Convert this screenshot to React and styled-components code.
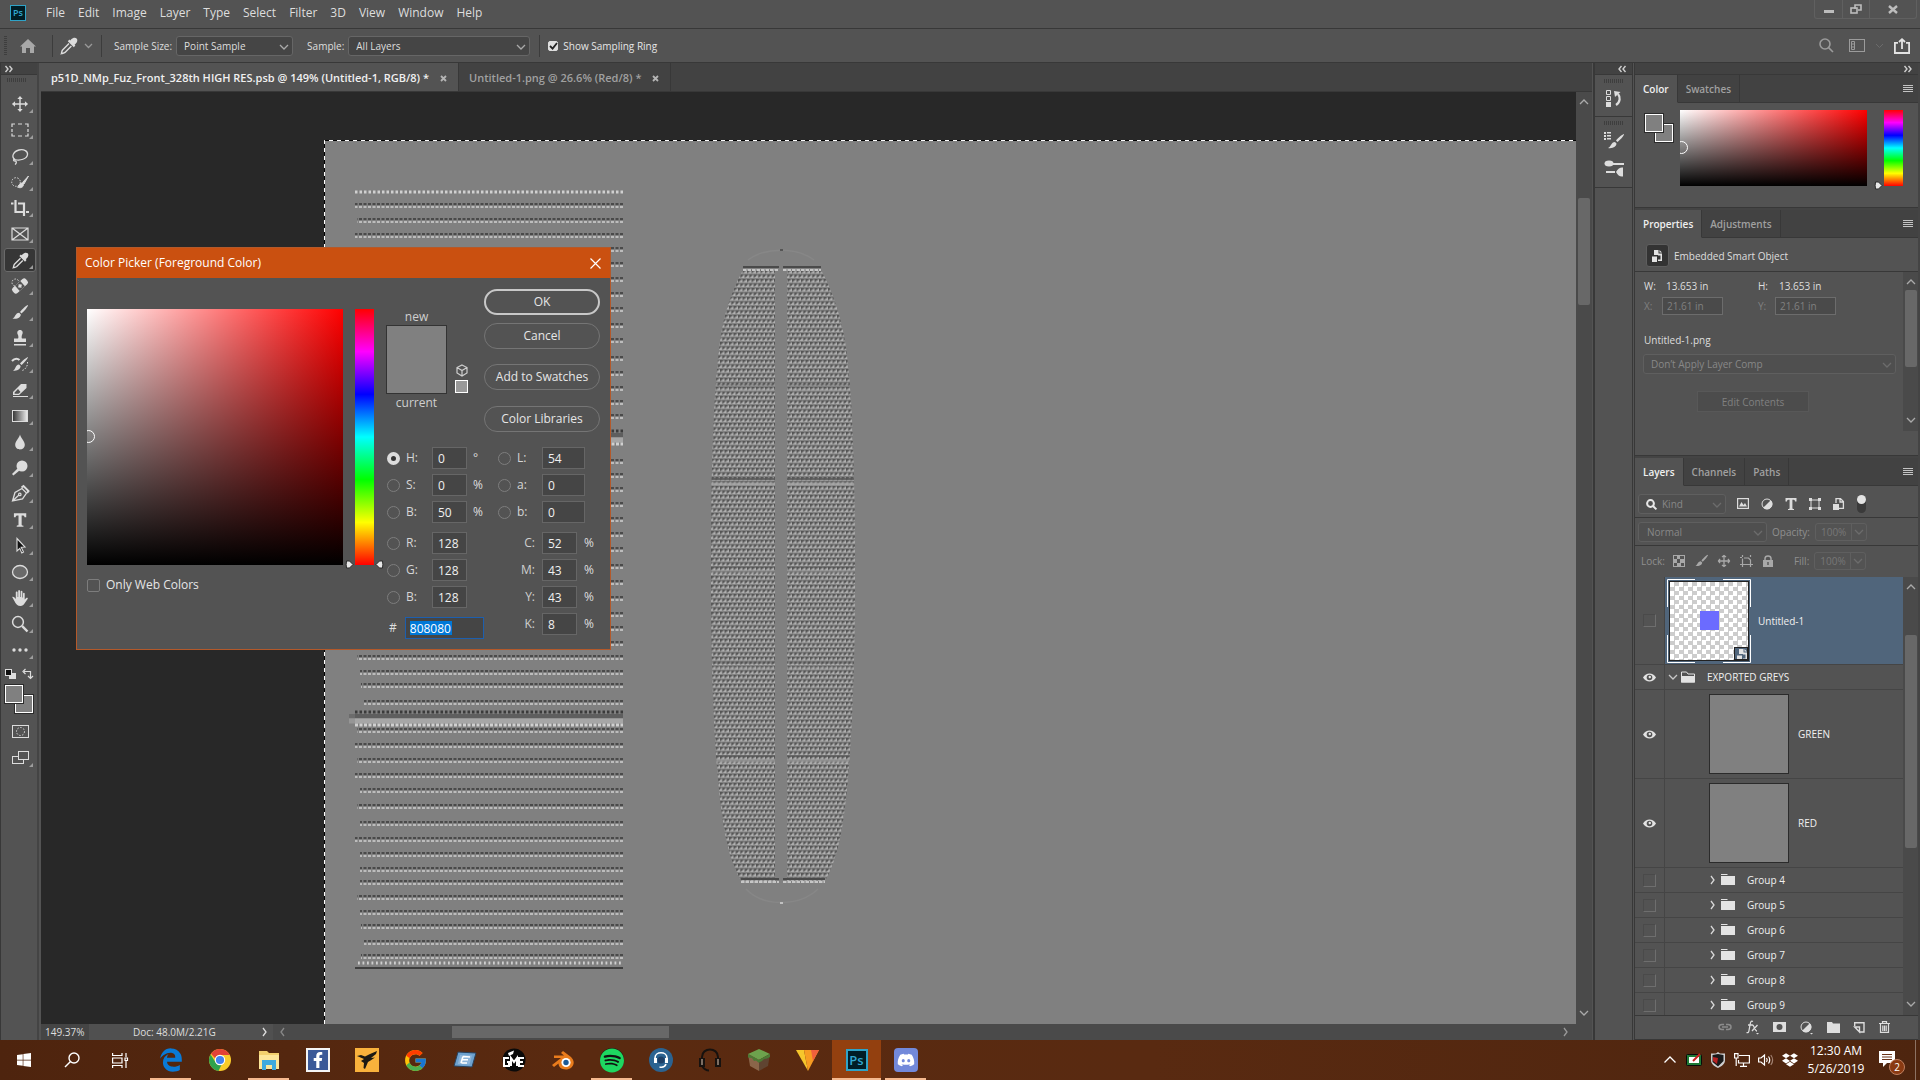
import React from 'react';
import styled, { createGlobalStyle, css } from 'styled-components';
import { FaWindows, FaSpotify, FaDropbox, FaDiscord, FaFacebookF } from 'react-icons/fa';
import { FaEdgeLegacy } from 'react-icons/fa6';
import { FcGoogle } from 'react-icons/fc';

const c = {
  panel: '#535353',
  dark: '#424242',
  line: '#383838',
  field: '#454545',
  track: '#4a4a4a',
  thumb: '#686868',
  text: '#dedede',
  dim: '#a0a0a0',
  off: '#808080',
  edge: '#666',
  orange: '#ca5010',
  icon: '#dcdcdc',
};

const Global = createGlobalStyle`
  * { box-sizing: border-box; }
  body {
    margin: 0;
    overflow: hidden;
    background: ${c.panel};
    color: ${c.text};
    font-family: "Open Sans", "Noto Sans", sans-serif;
    font-size: 10px;
    line-height: 16px;
  }
  button, input, select {
    margin: 0;
    font: inherit;
    color: inherit;
  }
  button {
    padding: 0;
    border: 0;
    background: none;
  }
  ul { margin: 0; padding: 0; list-style: none; }
`

const Screen = styled.div`
  display: flex;
  flex-direction: column;
  height: 100vh;
`

const Row = styled.div`
  display: flex;
  align-items: center;
  gap: ${p => p.$gap || 0}px;
`

const Spacer = styled.div`
  flex: 1;
`

const Svg = styled.svg`
  display: block;
  flex: none;
  overflow: visible;
`

// ---------- menu + options bar ----------

const MenuBar = styled.nav`
  display: flex;
  align-items: flex-start;
  height: 29px;
  padding-left: 10px;
  border-bottom: 1px solid ${c.line};
`

const MenuItems = styled.div`
  display: flex;
  gap: 13px;
  margin-left: 20px;
  font-size: 12px;
  line-height: 26px;
`

const PsLogo = styled.div`
  width: ${p => p.$size}px;
  height: ${p => p.$size}px;
  border: ${p => (p.$size > 20 ? 2 : 1)}px solid #2fa3c7;
  background: #001d26;
  color: #31a8d0;
  font-size: ${p => (p.$size > 20 ? 13 : 9)}px;
  font-weight: 600;
  line-height: ${p => (p.$size > 20 ? 18 : 13)}px;
  text-align: center;
`

const LogoSlot = styled.div`
  padding-top: 5px;
`

const WindowButtons = styled.div`
  display: flex;
  height: 19px;
  margin: 0 3px 0 auto;
  border: 1px solid #606060;
  border-top: 0;
  border-radius: 0 0 3px 3px;
  button {
    display: flex;
    align-items: center;
    justify-content: center;
    width: 27px;
  }
  button + button { border-left: 1px solid #606060; }
  button:last-child { width: 47px; }
`

const OptionsBar = styled.div`
  display: flex;
  align-items: center;
  height: 33px;
  padding: 0 10px 0 4px;
  background: ${c.panel};
`

const Separator = styled.div`
  width: 1px;
  height: 22px;
  margin: 0 ${p => p.$right}px 0 ${p => p.$left}px;
  background: #3c3c3c;
`

const Grip = styled.div`
  width: ${p => (p.$wide ? 20 : 3)}px;
  height: ${p => (p.$wide ? 4 : 20)}px;
  background: repeating-linear-gradient(
    ${p => (p.$wide ? 'to right' : 'to bottom')}, #3e3e3e 0 1px, transparent 1px 2px);
`

const SelectWrap = styled.div`
  position: relative;
  width: ${p => (p.$w ? p.$w + 'px' : 'auto')};
  color: ${p => (p.$off ? '#888' : c.text)};
  select {
    display: block;
    appearance: none;
    width: 100%;
    height: 20px;
    padding: 0 20px 0 ${p => p.$pad || 7}px;
    border: 1px solid ${p => (p.$off ? '#5f5f5f' : c.edge)};
    border-radius: 3px;
    background: ${p => (p.$off ? '#4f4f4f' : c.field)};
    opacity: 1;
  }
  svg.chev {
    position: absolute;
    right: 4px;
    top: 50%;
    margin-top: -2px;
    pointer-events: none;
  }
  svg.lens {
    position: absolute;
    left: 8px;
    top: 5px;
  }
`

const Tick = styled.input`
  appearance: none;
  display: block;
  width: ${p => p.$size}px;
  height: ${p => p.$size}px;
  border: 1px solid #7d7d7d;
  border-radius: 2px;
  background: ${c.panel};
  &:checked {
    border-color: ${c.text};
    background: ${c.text};
  }
`

const TickWrap = styled.label`
  position: relative;
  display: flex;
  align-items: center;
  gap: ${p => p.$gap}px;
  color: #e6e6e6;
  svg { position: absolute; left: 1px; top: 4px; }
`

const SampleGroup = styled.div`
  display: flex;
  align-items: center;
  gap: 4px;
  margin-left: ${p => p.$left || 0}px;
`

const HomeButton = styled.button`
  margin: 0 16px 0 13px;
`

const Chevron = ({ dir = 'down', color = '#aaa', className }) => {
  const d = {
    down: 'M1 1 L5 5 L9 1',
    up: 'M1 5 L5 1 L9 5',
    right: 'M3 -1 L6 3 L3 7',
    left: 'M6 -1 L3 3 L6 7',
  }[dir]
  return (
    <Svg className={className} width="10" height="6" viewBox="0 0 10 6" fill="none" stroke={color} strokeWidth="1.3">
      <path d={d} />
    </Svg>
  )
}

const Select = ({ label, value, w, off, pad, lens }) => (
  <SelectWrap $w={w} $off={off} $pad={pad}>
    {lens && (
      <Svg className="lens" width="11" height="11" viewBox="0 0 11 11" fill="none" stroke="#e8e8e8" strokeWidth="2">
        <circle cx="4.5" cy="4.5" r="3.4" /><path d="M7 7 L10.4 10.4" />
      </Svg>
    )}
    <select aria-label={label} defaultValue={value} disabled={off}>
      <option>{value}</option>
    </select>
    <Chevron className="chev" color={off ? '#6c6c6c' : '#aaa'} />
  </SelectWrap>
)

const Eyedropper = ({ size = 18 }) => (
  <Svg width={size} height={size} viewBox="0 0 18 18">
    <path d="M11 2.6 C13 0.4 15.4 0.2 16.6 1.4 C17.8 2.6 17.6 5 15.4 7 L14.6 7.8 L15.4 8.6 L13.8 10.2 L7.8 4.2 L9.4 2.6 L10.2 3.4 Z" fill={c.icon} />
    <path d="M9 6.6 L2.6 13 C1.6 14.2 2 14.8 1.4 16.6 C3.2 16 3.8 16.4 5 15.4 L11.4 9" fill="none" stroke={c.icon} strokeWidth="1.4" />
  </Svg>
)

const Arrows = ({ left }) => (
  <Svg width="8" height="6" fill="none" stroke="#cfcfcf" strokeWidth="1.4">
    <path d={left ? 'M3.5 0 L1 3 L3.5 6 M7.5 0 L5 3 L7.5 6' : 'M.5 0 L3 3 L.5 6 M4.5 0 L7 3 L4.5 6'} />
  </Svg>
)

const Menu = () => (
  <MenuBar>
    <LogoSlot><PsLogo $size={16}>Ps</PsLogo></LogoSlot>
    <MenuItems>
      {['File', 'Edit', 'Image', 'Layer', 'Type', 'Select', 'Filter', '3D', 'View', 'Window', 'Help'].map(m => (
        <button key={m}>{m}</button>
      ))}
    </MenuItems>
    <WindowButtons>
      <button aria-label="Minimize">
        <Svg width="10" height="10"><rect y="6" width="10" height="3" fill="#bdbdbd" /></Svg>
      </button>
      <button aria-label="Restore">
        <Svg width="12" height="10" fill="none" stroke="#bdbdbd" strokeWidth="1.6">
          <path d="M5 5 V1 H11 V6 H8" /><rect x="1" y="4" width="6" height="5" />
        </Svg>
      </button>
      <button aria-label="Close">
        <Svg width="10" height="9" fill="none" stroke="#bdbdbd" strokeWidth="2.4"><path d="M1 1 L9 8 M9 1 L1 8" /></Svg>
      </button>
    </WindowButtons>
  </MenuBar>
)

const Options = () => (
  <OptionsBar>
    <Grip />
    <HomeButton aria-label="Home">
      <Svg width="16" height="16"><path d="M8 1 L16 8.5 H14 V15 H10 V10 H6 V15 H2 V8.5 H0 Z" fill="#a8a8a8" /></Svg>
    </HomeButton>
    <Separator $left={0} $right={7} />
    <Eyedropper />
    <Svg width="22" height="6" viewBox="-7 0 22 6" fill="none" stroke="#999" strokeWidth="1.3"><path d="M0 1 L3.5 4.5 L7 1" /></Svg>
    <Separator $left={1} $right={12} />
    <SampleGroup>
      <span>Sample Size:</span>
      <Select label="Sample Size" value="Point Sample" w={117} />
    </SampleGroup>
    <SampleGroup $left={14}>
      <span>Sample:</span>
      <Select label="Sample" value="All Layers" w={182} />
    </SampleGroup>
    <Separator $left={9} $right={8} />
    <TickWrap $gap={5}>
      <Tick type="checkbox" $size={10} defaultChecked />
      <Svg width="9" height="8" fill="none" stroke="#222" strokeWidth="1.8"><path d="M1 4 L3.6 6.6 L8 1" /></Svg>
      Show Sampling Ring
    </TickWrap>
    <Spacer />
    <Row $gap={15}>
      <Svg width="15" height="15" fill="none" stroke="#9b9b9b" strokeWidth="1.6"><circle cx="6" cy="6" r="5" /><path d="M9.6 9.6 L14 14" /></Svg>
      <Row $gap={11}>
        <Svg width="16" height="13" fill="none" stroke="#9b9b9b"><rect x=".5" y=".5" width="15" height="12" /><path d="M2.5 2.5 H5.5 V10.5 H2.5 Z M2.5 5 H5.5 M2.5 8 H5.5" /></Svg>
        <Svg width="7" height="5" fill="none" stroke="#6b6b6b"><path d="M0 1 L3.5 4.5 L7 1" /></Svg>
        <Svg width="16" height="16" fill="none" stroke="#e3e3e3" strokeWidth="1.8"><path d="M4 4.9 H0.9 V15 H15.1 V4.9 H12 M8 11 V1.6 M5 4 L8 1.2 L11 4" /></Svg>
      </Row>
    </Row>
  </OptionsBar>
)

// ---------- tool column ----------

const Workspace = styled.main`
  display: flex;
  flex: 1;
  min-height: 0;
  border-top: 1px solid ${c.line};
`

const ToolColumn = styled.aside`
  display: flex;
  flex-direction: column;
  flex: none;
  width: 39px;
  border-left: 1px solid ${c.line};
  border-right: 2px solid #444;
`

const ColumnHead = styled.div`
  display: flex;
  align-items: center;
  justify-content: ${p => p.$side || 'flex-start'};
  height: 12px;
  padding: 0 6px 0 4px;
  border-bottom: 1px solid ${c.line};
  background: ${c.dark};
`

const GripRow = styled.div`
  display: flex;
  justify-content: center;
  padding: 3px 4px 9px 0;
`

const Tools = styled.div`
  display: grid;
  grid-auto-rows: 26px;
  align-items: center;
  padding: 0 3px;
`

const ToolButton = styled.button`
  position: relative;
  display: flex;
  align-items: center;
  justify-content: center;
  width: 32px;
  height: 24px;
  border-radius: 3px;
  ${p => p.$active && css`
    background: #363636;
    box-shadow: inset 0 0 0 1px #6a6a6a;
  `}
  &::after {
    content: '';
    position: absolute;
    right: 3px;
    bottom: 3px;
    border: 2px solid #9c9c9c;
    border-left-color: transparent;
    border-top-color: transparent;
    display: ${p => (p.$plain ? 'none' : 'block')};
  }
`

const Typeface = () => (
  <path d="M3.5 3 H14.5 V6.5 H13 C12.8 5 12.5 4.8 10.4 4.8 V13 C10.4 13.8 10.8 14 12 14 V15 H6 V14 C7.2 14 7.6 13.8 7.6 13 V4.8 C5.5 4.8 5.2 5 5 6.5 H3.5 Z" fill={c.icon} />
)

const brushPath = 'M17 2 C17.5 3 13 8.5 10.5 10.5 L9 9 C11 6.5 15.5 2 17 2 Z M8.2 9.8 L9.8 11.4 C10 14 6.5 16.5 1.5 15.5 C4.5 14.5 4 10 8.2 9.8 Z'

const L = c.icon
const toolIcons = [
  ['Move', <path d="M9 0 L12 3.5 H9.8 V8.2 H14.5 V6 L18 9 L14.5 12 V9.8 H9.8 V14.5 H12 L9 18 L6 14.5 H8.2 V9.8 H3.5 V12 L0 9 L3.5 6 V8.2 H8.2 V3.5 H6 Z" fill={L} transform="translate(.9 .9) scale(.9)" />],
  ['Marquee', <path d="M1 6 V3 H4 M7 3 H11 M14 3 H17 V6 M17 8 V11 M17 12.5 V15 H14 M11 15 H7 M4 15 H1 V12.5 M1 11 V8" fill="none" stroke={L} strokeWidth="1.2" />],
  ['Lasso', <path d="M4 12.5 C0 10 2 4.5 8 3 C13 2 17 4 16.5 7.5 C16 12 9 14 4 12.5 C2 11.5 2 14 4 14 C6 14 5.5 16.5 4 17.5" fill="none" stroke={L} strokeWidth="1.3" />],
  ['Quick Selection', <g><circle cx="5" cy="9" r="4.3" fill="none" stroke={L} strokeDasharray="1.5 1.5" /><path d="M17.5 3 L11.5 9.5 L13 11 Z M11 10 C8 10 8.5 13 6.5 14 C9 15.5 12.5 14.5 12.5 11.5 Z" fill={L} stroke={L} /></g>],
  ['Crop', <path d="M0 4.5 H2.5 M4.5 1 V13 H12 M7 4.5 H13 V17 M15 13 H18" fill="none" stroke={L} strokeWidth="2.2" />],
  ['Frame', <path d="M1 3 H17 V15 H1 Z M1 3 L17 15 M17 3 L1 15" fill="none" stroke={L} strokeWidth="1.2" />],
  ['Eyedropper', null],
  ['Healing Brush', <g><circle cx="4.5" cy="5.5" r="3.5" fill="none" stroke={L} strokeDasharray="1.5 1.5" /><g transform="rotate(-42 9 9)"><rect x="0" y="5.5" width="18" height="7" rx="2.5" fill={L} /><rect x="5.5" y="5.5" width="7" height="7" fill="#535353" /><path d="M7 9 H11 M9 7 V11" stroke={L} strokeWidth="1.6" /></g></g>],
  ['Brush', <path d={brushPath} fill={L} />],
  ['Clone Stamp', <path d="M9 1 C11.5 1 12.5 3.5 11 6 C10.5 7.5 10.5 9 11 9.5 H15 V13 H3 V9.5 H7 C7.5 9 7.5 7.5 7 6 C5.5 3.5 6.5 1 9 1 Z M3 15 H15 V16.5 H3 Z" fill={L} />],
  ['History Brush', <g><path d="M17 2 C17.5 3 12 9 10.5 10 L9 8.5 C11 6 16 2 17 2 Z M8 9.5 L9.6 11 C9.6 13.5 6.5 16.5 2 15.5 C5 14.5 4 10 8 9.5 Z" fill={L} /><path d="M1 6 C4 2.5 7 3.5 8.5 5" fill="none" stroke={L} strokeWidth="2" /><path d="M16.5 7 C17 11 14 15 11 15.5" fill="none" stroke={L} strokeDasharray="1.5 1.5" /></g>],
  ['Eraser', <path d="M2 11 L10 3 H15.5 V7 L8 14 H2 Z M3.6 11.4 V12.8 H7.5 L9.5 11 L7 8 Z M2 15 H17 V16 H2 Z" fillRule="evenodd" fill={L} />],
  ['Gradient', <g><defs><linearGradient id="toolGrad"><stop offset="0" stopColor="#333" /><stop offset="1" stopColor="#eee" /></linearGradient></defs><rect x="1.5" y="3.5" width="15" height="11" fill="url(#toolGrad)" stroke={L} /></g>],
  ['Blur', <path d="M9 1.5 C10 5.5 13.8 8 13.8 11.8 C13.8 14.8 11.5 16.5 9 16.5 C6.5 16.5 4.2 14.8 4.2 11.8 C4.2 8 8 5.5 9 1.5 Z" fill={L} />],
  ['Dodge', <g fill={L}><ellipse cx="11" cy="7" rx="5.5" ry="5.5" /><path d="M6.5 9.5 L1 15 L2.4 16.4 L8.5 11.5 Z" /></g>],
  ['Pen', <g fill="none" stroke={L} strokeWidth="1.3"><path d="M1.5 16 L4 7.5 L11 3.5 L15.5 8 L11.5 13.8 Z M1.5 16 L8 10" /><path d="M10.5 2.5 L12.5 1 L17.5 6 L16 8" strokeWidth="2" /><circle cx="8.8" cy="9.4" r="1.2" /></g>],
  ['Type', <g transform="translate(-1 -1) scale(1.12)"><Typeface /></g>],
  ['Path Selection', <path d="M6 1.5 L14 10 L10.2 10.2 L12.5 15 L10.8 16 L8.8 11.4 L6 14 Z" fill="#111" stroke={L} strokeWidth="1.1" />],
  ['Ellipse', <ellipse cx="9" cy="9" rx="7.5" ry="6.5" fill="#6a6a6a" stroke={L} strokeWidth="1.3" />],
  ['Hand', <path d="M1.2 8 C2.2 7.2 3.2 8 4.8 10 V3.5 C4.8 2.2 6.6 2.2 6.6 3.5 V8 H7.2 V2 C7.2 .8 9 .8 9 2 V8 H9.6 V2.5 C9.6 1.4 11.4 1.4 11.4 2.5 V8.5 H12 V4.5 C12 3.4 13.7 3.4 13.7 4.5 V10.5 L15.5 8.8 C16.5 8.4 17.2 9.2 16.6 10 L13.5 14.5 C12.5 16 11.5 17 9.5 17 C6.5 17 5.5 15.5 4.5 14 Z" fill={L} />],
  ['Zoom', <g fill="none" stroke={L}><circle cx="7" cy="7" r="5.4" strokeWidth="1.5" /><path d="M11.2 11.2 L16.5 16.5" strokeWidth="2.4" /></g>],
  ['More', <g fill={L}><circle cx="3" cy="9" r="1.7" /><circle cx="9" cy="9" r="1.7" /><circle cx="15" cy="9" r="1.7" /></g>],
]

const MiniRow = styled.div`
  display: flex;
  align-items: center;
  justify-content: space-between;
  height: 14px;
  margin-top: 4px;
  padding: 0 4px;
`

const ColorPair = styled.div`
  display: grid;
  grid-template-columns: 10px 8px 10px;
  grid-template-rows: 10px 8px 10px;
  width: max-content;
  margin: ${p => p.$margin || '0'};
`

const Chip = styled.span`
  grid-area: ${p => (p.$back ? '2 / 2 / 4 / 4' : '1 / 1 / 3 / 3')};
  z-index: ${p => (p.$back ? 0 : 1)};
  border: 1px solid #fff;
  outline: 1px solid #2b2b2b;
  background: #808080;
`

const ToolExtras = styled.div`
  display: flex;
  flex-direction: column;
  gap: 3px;
  margin-top: 6px;
  padding: 0 3px;
`

const ToolPanel = () => (
  <ToolColumn>
    <ColumnHead><Arrows /></ColumnHead>
    <GripRow><Grip $wide /></GripRow>
    <Tools>
      {toolIcons.map(([name, art]) => (
        <ToolButton key={name} aria-label={name} $active={name === 'Eyedropper'}>
          {art ? <Svg width="18" height="18" viewBox="0 0 18 18">{art}</Svg> : <Eyedropper size={17} />}
        </ToolButton>
      ))}
    </Tools>
    <MiniRow>
      <Svg width="11" height="10"><rect x="4" y="4" width="7" height="6" fill="#ddd" /><rect x=".5" y=".5" width="6" height="6" fill="#111" stroke="#ddd" /></Svg>
      <Svg width="11" height="10" fill="none" stroke="#ddd" strokeWidth="1.2"><path d="M2 2.5 H8.5 V9 M3.5 0 L1 2.5 L3.5 5 M6 7 L8.5 9.5 L11 7" /></Svg>
    </MiniRow>
    <ColorPair $margin="4px 0 0 4px"><Chip /><Chip $back /></ColorPair>
    <ToolExtras>
      <ToolButton aria-label="Quick Mask" $plain>
        <Svg width="17" height="13" fill="none" stroke={L}><rect x=".5" y=".5" width="16" height="12" /><circle cx="8.5" cy="6.5" r="4" strokeDasharray="1.5 1.5" /></Svg>
      </ToolButton>
      <ToolButton aria-label="Screen Mode">
        <Svg width="17" height="14" stroke={L}><rect x=".5" y="5.5" width="11" height="7" fill="none" /><rect x="6.5" y=".5" width="10" height="8" fill="#535353" /></Svg>
      </ToolButton>
    </ToolExtras>
  </ToolColumn>
)

// ---------- document ----------

const Document = styled.section`
  display: flex;
  flex-direction: column;
  flex: 1;
  min-width: 0;
  margin-left: 2px;
`

const DocTabs = styled.div`
  display: flex;
  height: 29px;
  background: ${c.dark};
  border-bottom: 1px solid ${c.line};
  font-size: 11px;
`

const DocTab = styled.button`
  display: flex;
  align-items: center;
  gap: 11px;
  padding: 2px 11px 0 10px;
  border-right: 1px solid ${c.line};
  background: ${p => (p.$active ? c.panel : 'transparent')};
  color: ${p => (p.$active ? '#f0f0f0' : c.dim)};
  font-weight: 600;
`

const Cross = () => (
  <Svg width="7" height="7" fill="none" stroke="#b5b5b5" strokeWidth="1.8"><path d="M1 1 L6 6 M6 1 L1 6" /></Svg>
)

const View = styled.div`
  display: flex;
  flex: 1;
  min-height: 0;
`

const Pasteboard = styled.div`
  display: flex;
  flex: 1;
  min-width: 0;
  padding: 48px 0 0 283px;
  background: #282828;
`

const Sheet = styled.div`
  flex: 1;
  min-width: 0;
  overflow: hidden;
  background: #808080;
  svg { width: 100%; height: 100%; }
`

const VScroll = styled.div`
  display: flex;
  flex-direction: column;
  align-items: center;
  flex: none;
  width: ${p => p.$w || 16}px;
  padding: 7px 0 8px;
  background: ${c.track};
`

const VThumb = styled.div`
  width: 12px;
  height: ${p => p.$h}px;
  margin: ${p => p.$top}px 0 auto;
  border-radius: 2px;
  background: ${c.thumb};
`

const StatusBar = styled.div`
  display: flex;
  align-items: center;
  height: 16px;
  padding-right: 21px;
  background: ${c.track};
`

const ZoomBox = styled.input`
  width: 48px;
  height: 16px;
  padding: 0 4px;
  border: 0;
  background: ${c.field};
`

const DocInfo = styled.button`
  display: flex;
  align-items: center;
  justify-content: space-between;
  width: 184px;
  height: 16px;
  padding: 0 3px 0 44px;
  background: #505050;
`

const ScrollLeft = styled.div`
  padding-left: 5px;
`

const HThumb = styled.div`
  width: 217px;
  height: 12px;
  margin: 0 auto 0 164px;
  background: ${c.thumb};
`

// [y, left edge] of every rivet line of the left plate
const rivets = [
  [204, 355], [219, 357], [234, 355], [248, 357], [263, 357], [278, 357], [293, 357], [308, 357], [324, 357], [339, 357],
  [357, 357], [372, 357], [387, 357], [401, 357], [415, 357], [460, 357], [474, 357],
  [488, 357], [503, 357], [518, 357], [533, 357], [548, 357], [565, 357], [581, 357], [597, 357], [613, 357],
  [627, 357], [642, 357], [656, 357], [671, 360], [684, 361], [701, 364], [729, 357], [744, 355], [759, 357],
  [774, 355], [789, 360], [805, 357], [822, 360], [838, 355], [853, 360], [868, 360], [881, 360], [896, 357],
  [911, 360], [925, 361], [941, 364], [955, 361],
]

const seams = [431, 712]

// cross ribs of the hull and how strongly they show
const ribs = [[390, 0.3], [484, 0.8], [572, 0.3], [668, 0.3], [761, 0.6]]

const Rivet = ({ y, x }) => (
  <g strokeWidth="2" strokeDasharray="3 1.5">
    <path d={`M623 ${y} H${x}`} stroke="#4a4a4a" />
    <path d={`M623 ${y + 3} H${x}`} stroke="#bcbcbc" />
  </g>
)

const Artwork = () => (
  <Svg>
    <defs>
      <pattern id="mesh" width="4.5" height="9" patternUnits="userSpaceOnUse">
        <rect width="4.5" height="9" fill="#828282" />
        <path d="M0 0 H3.5 L0 3 Z M2.2 4.5 H4.5 V6 L2.2 7.5 Z M0 4.5 H1.3 L0 5.5 Z" fill="#555" />
        <path d="M4.5 .5 V3.6 H.8 Z M2 5 V8.1 H0 V6.4 Z M4.5 6.8 V8.1 H3 Z" fill="#b0b0b0" />
      </pattern>
      <clipPath id="hull">
        <path d="M743 270 C731 292 724 315 721 335 C715 375 711 440 711 574 C711 700 716 770 722 815 C726 845 732 865 741 881 H775 V270 Z M821 270 C833 292 840 315 844 335 C851 375 855 440 855 574 C855 700 850 770 844 815 C840 845 834 865 825 881 H787 V270 Z" />
      </clipPath>
    </defs>
    <g transform="translate(-324 -140)">
      <g fill="none">
        <path d="M355 192 H623" stroke="#d0d0d0" strokeWidth="3" strokeDasharray="2.5 2" />
        {rivets.map(([y, x]) => <Rivet key={y} y={y} x={x} />)}
        {seams.map(y => (
          <g key={y}>
            <path d={`M355 ${y + 4} H623`} stroke="#5e5e5e" strokeWidth="4" />
            <path d={`M355 ${y + 9} H623`} stroke="#a6a6a6" strokeWidth="5" />
            <path d={`M349 ${y + 4} H355`} stroke="#6c6c6c" strokeWidth="4" />
            <path d={`M349 ${y + 9} H355`} stroke="#969696" strokeWidth="5" />
            <path d={`M355 ${y} H623`} stroke="#3a3a3a" strokeWidth="3" strokeDasharray="2.5 2" />
            <path d={`M355 ${y + 13} H623`} stroke="#d0d0d0" strokeWidth="3" strokeDasharray="3 1.5" />
          </g>
        ))}
        <path d="M358 963 H621" stroke="#cfcfcf" strokeWidth="3" strokeDasharray="1.8 2.7" />
        <path d="M355 968 H623" stroke="#3e3e3e" strokeWidth="2" />
      </g>
      <rect x="708" y="268" width="150" height="614" fill="url(#mesh)" clipPath="url(#hull)" />
      <g clipPath="url(#hull)">
        {ribs.map(([y, o]) => (
          <g key={y} opacity={o}>
            <path d={`M708 ${y - 5} H858`} stroke="#555" strokeWidth="2" />
            <path d={`M708 ${y} H858`} stroke="#a4a4a4" strokeWidth="3" />
          </g>
        ))}
      </g>
      <g strokeWidth="2" fill="none">
        <path d="M743 267 H779 M783 267 H821 M741 879 H779 M783 879 H825" stroke="#4a4a4a" />
        <path d="M743 270 H779 M783 270 H821 M741 882 H779 M783 882 H825" stroke="#c6c6c6" strokeDasharray="3.5 1" />
      </g>
      <g fill="none" stroke="#878787" strokeWidth="1.5">
        <path d="M748 260 C765 247 797 247 814 260" />
        <path d="M746 889 C763 907 799 907 818 889" />
      </g>
      <path d="M780 249 H783 V251 H780 Z" fill="#555" />
      <path d="M780 902 H783 V904 H780 Z" fill="#c0c0c0" />
      <path d="M324.5 1100 V140.5 H2600" fill="none" stroke="#fff" />
      <path d="M324.5 1100 V140.5 H2600" fill="none" stroke="#000" strokeDasharray="4 4" />
    </g>
  </Svg>
)

const DocumentArea = () => (
  <Document>
    <DocTabs>
      <DocTab $active>p51D_NMp_Fuz_Front_328th HIGH RES.psb @ 149% (Untitled-1, RGB/8) *<Cross /></DocTab>
      <DocTab>Untitled-1.png @ 26.6% (Red/8) *<Cross /></DocTab>
    </DocTabs>
    <View>
      <Pasteboard><Sheet><Artwork /></Sheet></Pasteboard>
      <VScroll>
        <Chevron dir="up" />
        <VThumb $h={107} $top={93} />
        <Chevron />
      </VScroll>
    </View>
    <StatusBar>
      <ZoomBox aria-label="Zoom" defaultValue="149.37%" />
      <DocInfo>Doc: 48.0M/2.21G<Chevron dir="right" color="#ddd" /></DocInfo>
      <ScrollLeft><Chevron dir="left" color="#888" /></ScrollLeft>
      <HThumb />
      <Chevron dir="right" color="#999" />
    </StatusBar>
  </Document>
)

// ---------- right side panels ----------

const Dock = styled.aside`
  display: flex;
  flex: none;
  margin-left: 1px;
  border-left: 2px solid ${c.line};
`

const IconStrip = styled.div`
  width: 38px;
  border-right: 1px solid ${c.line};
`

const StripGroup = styled.div`
  display: flex;
  flex-direction: column;
  align-items: center;
  gap: 7px;
  padding: 4px 0 9px;
  border-bottom: 1px solid ${c.line};
  svg + svg { margin-top: 4px; }
`

const Panels = styled.div`
  display: flex;
  flex-direction: column;
  width: 286px;
  margin-left: 1px;
  border-left: 1px solid ${c.line};
  border-right: 2px solid #444;
  background: #444;
`

const Panel = styled.section`
  display: flex;
  flex-direction: column;
  flex: ${p => (p.$h ? 'none' : '1')};
  height: ${p => (p.$h ? p.$h + 'px' : 'auto')};
  min-height: 0;
  margin-bottom: ${p => (p.$h ? 2 : 0)}px;
  border-bottom: 1px solid ${c.line};
  background: ${c.panel};
`

const TabStrip = styled.div`
  display: flex;
  align-items: stretch;
  flex: none;
  height: 28px;
  background: ${c.dark};
`

const Tab = styled.button`
  padding: 0 8px 0 8px;
  border-right: 1px solid ${c.line};
  border-bottom: 1px solid ${p => (p.$active ? c.panel : c.line)};
  background: ${p => (p.$active ? c.panel : 'transparent')};
  color: ${p => (p.$active ? '#f0f0f0' : c.dim)};
  font-weight: 600;
`

const TabRest = styled.div`
  display: flex;
  align-items: center;
  justify-content: flex-end;
  flex: 1;
  padding-right: 5px;
  border-bottom: 1px solid ${c.line};
`

const Tabs = ({ items }) => (
  <TabStrip>
    {items.map((t, i) => <Tab key={t} $active={i === 0}>{t}</Tab>)}
    <TabRest>
      <button aria-label="Panel menu">
        <Svg width="10" height="7" fill="#c4c4c4"><path d="M0 0 H10 V1 H0 Z M0 2 H10 V3 H0 Z M0 4 H10 V5 H0 Z M0 6 H10 V7 H0 Z" /></Svg>
      </button>
    </TabRest>
  </TabStrip>
)

const ColorBody = styled.div`
  display: flex;
  padding: 7px 15px 0 10px;
`

const Spectrum = styled.div`
  position: relative;
  flex: ${p => (p.$size ? 'none' : '1')};
  width: ${p => (p.$size ? p.$size + 'px' : 'auto')};
  height: ${p => p.$size || 76}px;
  overflow: hidden;
  background: linear-gradient(to top, #000, transparent), linear-gradient(to right, #fff, #f00);
  &::after {
    content: '';
    position: absolute;
    left: -5px;
    top: 50%;
    width: 11px;
    height: 11px;
    margin-top: -7px;
    border: 1px solid #fff;
    border-radius: 50%;
  }
`

const Hue = styled.div`
  position: relative;
  width: 19px;
  height: ${p => p.$h}px;
  margin-left: ${p => p.$left}px;
  background: linear-gradient(#f00, #f0f, #00f, #0ff, #0f0, #ff0, #f00);
  svg { position: absolute; bottom: -4px; left: -10px; }
  svg + svg { left: auto; right: -10px; transform: scaleX(-1); }
`

const Pointer = () => (
  <Svg width="9" height="9"><path d="M1.5 1 Q.8 4.5 1.5 8 L4.5 8 L8 4.5 L4.5 1 Z" fill="#e8e8e8" stroke="#2b2b2b" strokeWidth="1" /></Svg>
)

const ColorPanel = () => (
  <Panel $h={133}>
    <Tabs items={['Color', 'Swatches']} />
    <ColorBody>
      <ColorPair $margin="4px 7px 0 0"><Chip /><Chip $back /></ColorPair>
      <Spectrum />
      <Hue $h={76} $left={17}><Pointer /></Hue>
    </ColorBody>
  </Panel>
)

const PropsHead = styled.div`
  display: flex;
  align-items: center;
  gap: 5px;
  flex: none;
  height: 34px;
  padding: 2px 0 0 11px;
  border-bottom: 1px solid ${c.line};
`

const BadgeBox = styled.div`
  display: flex;
  align-items: center;
  justify-content: center;
  width: 23px;
  height: 23px;
  border: 1px solid #5e5e5e;
  border-radius: 3px;
  background: #333;
`

const PropsBody = styled.div`
  display: flex;
  height: 159px;
`

const PropsForm = styled.div`
  flex: 1;
  padding: 6px 7px 0 8px;
`

const Pairs = styled.div`
  display: grid;
  grid-template-columns: 18px 96px 17px 1fr;
  align-items: center;
  row-gap: 3px;
  margin: 0 0 17px 1px;
`

const OffLabel = styled.label`
  color: ${c.off};
`

const Value = styled.span`
  padding-left: 4px;
`

const SmallField = styled.input`
  width: 61px;
  height: 18px;
  padding: 0 4px;
  border: 1px solid #6c6c6c;
  background: #4a4a4a;
  color: ${c.off};
`

const FileName = styled.div`
  margin: 0 0 6px 1px;
`

const EditButton = styled.button`
  display: block;
  width: 112px;
  height: 21px;
  margin: 17px 0 0 54px;
  border: 1px solid #585858;
  background: #4c4c4c;
  color: ${c.off};
`

const SmartGlyph = () => (
  <Svg width="11" height="12" viewBox="0 0 11 12">
    <path d="M2 0 H6.5 V3.5 H10 V11 H6 V9.5 H8.5 V5.5 H6 V5 H2 Z M7.5 0 L10 2.5 H7.5 Z M0 6.5 H5 V12 H0 Z" fill="#e3e3e3" />
  </Svg>
)

const PropertiesPanel = () => (
  <Panel $h={246}>
    <Tabs items={['Properties', 'Adjustments']} />
    <PropsHead><BadgeBox><SmartGlyph /></BadgeBox>Embedded Smart Object</PropsHead>
    <PropsBody>
      <PropsForm>
        <Pairs>
          <span>W:</span><Value>13.653 in</Value>
          <span>H:</span><Value>13.653 in</Value>
          <OffLabel htmlFor="px">X:</OffLabel><SmallField id="px" defaultValue="21.61 in" disabled />
          <OffLabel htmlFor="py">Y:</OffLabel><SmallField id="py" defaultValue="21.61 in" disabled />
        </Pairs>
        <FileName>Untitled-1.png</FileName>
        <Select label="Layer comp" value="Don’t Apply Layer Comp" off />
        <EditButton disabled>Edit Contents</EditButton>
      </PropsForm>
      <VScroll $w={15}>
        <Chevron dir="up" />
        <VThumb $h={77} $top={5} />
        <Chevron />
      </VScroll>
    </PropsBody>
  </Panel>
)

const FilterRow = styled.div`
  display: flex;
  align-items: center;
  flex: none;
  gap: 5px;
  height: ${p => p.$h}px;
  padding: ${p => p.$pad || '0 0 0 3px'};
  border-bottom: ${p => (p.$last ? 0 : 1)}px solid ${c.line};
  color: #8f8f8f;
`

const FilterIcons = styled.div`
  display: flex;
  align-items: center;
  gap: 12px;
  margin-left: 6px;
`

const Toggle = styled.button`
  width: 9px;
  height: 18px;
  border-radius: 5px;
  background: #3a3a3a;
  &::before {
    content: '';
    display: block;
    width: 9px;
    height: 9px;
    margin-bottom: 9px;
    border-radius: 50%;
    background: #e3e3e3;
  }
`

const Percent = styled.span`
  display: flex;
  align-items: center;
  width: 52px;
  height: 18px;
  border: 1px solid #5f5f5f;
  border-radius: 3px;
  input {
    width: 36px;
    padding: 0 0 0 5px;
    border: 0;
    border-right: 1px solid #5f5f5f;
    background: none;
    color: #777;
  }
  svg { margin-left: 2px; }
`

const LockIcons = styled.div`
  display: flex;
  align-items: center;
  gap: 10px;
  margin: 0 16px 0 3px;
`

const LayerArea = styled.div`
  display: flex;
  flex: 1;
  min-height: 0;
`

const LayerList = styled.ul`
  flex: 1;
  min-width: 0;
  overflow: hidden;
`

const LayerItem = styled.li`
  display: grid;
  grid-template-columns: 30px 1fr;
  height: ${p => p.$h}px;
  border-bottom: 1px solid #454545;
`

const EyeCell = styled.button`
  display: flex;
  align-items: center;
  justify-content: center;
  border-right: 1px solid #454545;
`

const Empty = styled.span`
  width: 13px;
  height: 13px;
  border: 1px solid #4a4a4a;
  border-right-color: #6e6e6e;
  border-bottom-color: #6e6e6e;
`

const LayerCell = styled.div`
  display: flex;
  align-items: center;
  padding-left: ${p => p.$indent}px;
  background: ${p => (p.$active ? '#50657b' : 'transparent')};
  color: #f0f0f0;
`

const Thumb = styled.div`
  width: 80px;
  height: 80px;
  margin-right: 9px;
  border: 1px solid #2b2b2b;
  background: #808080;
`

const ArtThumb = styled.div`
  position: relative;
  display: flex;
  align-items: center;
  justify-content: center;
  width: 80px;
  height: 80px;
  margin-right: 9px;
  border: 1px solid #222;
  background: repeating-conic-gradient(#ccc 0 25%, #fff 0 50%) 0 0 / 9px 9px;
  &::before {
    content: '';
    width: 19px;
    height: 19px;
    background: #6b6bff;
  }
`

const Corners = styled.svg`
  position: absolute;
  left: -3px;
  top: -3px;
  width: 84px;
  height: 84px;
`

const SmartBadge = styled.div`
  position: absolute;
  right: 0;
  bottom: 0;
  width: 14px;
  height: 13px;
  padding: 1px 0 0 2px;
  overflow: hidden;
  background: #50657b;
  border: 1px solid #222;
`

const Name = styled.span`
  margin-left: ${p => p.$left || 0}px;
`

const PanelFoot = styled.div`
  display: flex;
  align-items: center;
  justify-content: flex-end;
  gap: 14px;
  flex: none;
  height: 24px;
  padding: 0 28px 1px 0;
  border-top: 1px solid ${c.line};
`

const EyeGlyph = () => (
  <Svg width="13" height="9"><path d="M0 4.5 C3 -.8 10 -.8 13 4.5 C10 9.8 3 9.8 0 4.5 Z" fill="#e3e3e3" /><circle cx="6.5" cy="4.5" r="2.8" fill="#535353" /><circle cx="6.8" cy="4" r="1.2" fill="#e3e3e3" /></Svg>
)

const Folder = ({ open }) => (
  <Svg width="14" height="12">
    {open
      ? <path d="M.5 11 V1 H5.5 L7 3 H13.5 V11 Z M.5 5.5 H13.5" fill="none" stroke="#e3e3e3" />
      : <path d="M0 0 H6 L7 1 H0 Z M0 2 H14 V11 H0 Z" fill="#e3e3e3" />}
    {open && <path d="M0 5.5 H14 V11.5 H0 Z" fill="#e3e3e3" />}
  </Svg>
)

const layers = [
  { name: 'GREEN', kind: 'image' },
  { name: 'RED', kind: 'image' },
  { name: 'Group 4' }, { name: 'Group 5' }, { name: 'Group 6' },
  { name: 'Group 7' }, { name: 'Group 8' }, { name: 'Group 9' },
]

const LayersPanel = () => (
  <Panel>
    <Tabs items={['Layers', 'Channels', 'Paths']} />
    <FilterRow $h={32} $pad="4px 0 0 3px">
      <Select label="Filter kind" value="Kind" w={88} off pad={23} lens />
      <FilterIcons>
        <Svg width="12" height="11"><rect x=".6" y=".6" width="10.8" height="9.8" fill="none" stroke="#ddd" strokeWidth="1.2" /><path d="M2 8.5 L4.5 4 L6.5 7 L8 5 L10 8.5 Z" fill="#ddd" /></Svg>
        <Svg width="12" height="12"><circle cx="6" cy="6" r="5" fill="none" stroke="#ddd" /><path d="M2.2 9.8 A5.3 5.3 0 0 0 9.8 2.2 Z" fill="#ddd" /></Svg>
        <Svg width="12" height="12" viewBox="3 3 12 12"><Typeface /></Svg>
        <Svg width="12" height="12"><rect x="2" y="2" width="8" height="8" fill="none" stroke="#ddd" /><path d="M0 0 H3 V3 H0 Z M9 0 H12 V3 H9 Z M0 9 H3 V12 H0 Z M9 9 H12 V12 H9 Z" fill="#ddd" /></Svg>
        <Svg width="12" height="12"><path d="M3 5 V.6 H7.5 L10.4 3.5 V10.4 H6 M7 0 V4 H11" fill="none" stroke="#ddd" strokeWidth="1.3" /><rect y="6" width="6" height="6" fill="#ddd" /></Svg>
        <Toggle aria-label="Layer filtering" />
      </FilterIcons>
    </FilterRow>
    <FilterRow $h={28}>
      <Select label="Blend mode" value="Normal" w={129} off pad={8} />
      <label htmlFor="opacity">Opacity:</label>
      <Percent><input id="opacity" defaultValue="100%" disabled /><Chevron color="#6c6c6c" /></Percent>
    </FilterRow>
    <FilterRow $h={31} $pad="0 0 2px 6px" $last>
      <span>Lock:</span>
      <LockIcons>
        <Svg width="12" height="12" fill="#a8a8a8"><path d="M0 0 H12 V12 H0 Z M1 1 V4 H4 V1 Z M7 1 V4 H11 V1 Z M4 4 V8 H7 V4 Z M1 8 V11 H4 V8 Z M8 8 V11 H11 V8 Z" fillRule="evenodd" /></Svg>
        <Svg width="13" height="13" viewBox="1 2 16 14"><path d={brushPath} fill="#a8a8a8" /></Svg>
        <Svg width="12" height="12" fill="none" stroke="#a8a8a8" strokeWidth="1.3"><path d="M6 0 V12 M0 6 H12 M4 2 L6 .5 L8 2 M4 10 L6 11.5 L8 10 M2 4 L.5 6 L2 8 M10 4 L11.5 6 L10 8" /></Svg>
        <Svg width="13" height="12" fill="none" stroke="#a8a8a8" strokeWidth="1.2"><path d="M2.5 0 V2 M0 2.5 H2 M2.5 3.5 V9.5 H10.5 V5 L8.5 3 H4 M2.5 10 V12 M0 9.5 H13 M10.5 10 V12 M10.5 0 V2" /></Svg>
        <Svg width="10" height="12"><path d="M2 5 V3.5 C2 0 8 0 8 3.5 V5" fill="none" stroke="#a8a8a8" strokeWidth="1.5" /><path d="M0 5 H10 V12 H0 Z M4.3 7 V10 H5.7 V7 Z" fill="#a8a8a8" fillRule="evenodd" /></Svg>
      </LockIcons>
      <label htmlFor="fill">Fill:</label>
      <Percent><input id="fill" defaultValue="100%" disabled /><Chevron color="#6c6c6c" /></Percent>
    </FilterRow>
    <LayerArea>
      <LayerList>
        <LayerItem $h={88}>
          <EyeCell aria-label="Show Untitled-1"><Empty /></EyeCell>
          <LayerCell $active $indent={4}>
            <ArtThumb>
              <Corners fill="none" stroke="#fff"><path d="M.5 28 V.5 H28 M56 .5 H83.5 V28 M.5 56 V83.5 H28 M56 83.5 H83.5 V56" /></Corners>
              <SmartBadge><SmartGlyph /></SmartBadge>
            </ArtThumb>
            <Name>Untitled-1</Name>
          </LayerCell>
        </LayerItem>
        <LayerItem $h={25}>
          <EyeCell aria-label="Hide EXPORTED GREYS"><EyeGlyph /></EyeCell>
          <LayerCell $indent={3}>
            <Row $gap={3}><Chevron color="#c8c8c8" /><Folder open /></Row>
            <Name $left={12}>EXPORTED GREYS</Name>
          </LayerCell>
        </LayerItem>
        {layers.map(l => l.kind === 'image' ? (
          <LayerItem key={l.name} $h={89}>
            <EyeCell aria-label={'Hide ' + l.name}><EyeGlyph /></EyeCell>
            <LayerCell $indent={44}><Thumb /><Name>{l.name}</Name></LayerCell>
          </LayerItem>
        ) : (
          <LayerItem key={l.name} $h={25}>
            <EyeCell aria-label={'Show ' + l.name}><Empty /></EyeCell>
            <LayerCell $indent={43}>
              <Row $gap={3}><Chevron dir="right" color="#d8d8d8" /><Folder /></Row>
              <Name $left={12}>{l.name}</Name>
            </LayerCell>
          </LayerItem>
        ))}
      </LayerList>
      <VScroll $w={15}>
        <Chevron dir="up" />
        <VThumb $h={213} $top={45} />
        <Chevron />
      </VScroll>
    </LayerArea>
    <PanelFoot>
      <button aria-label="Link layers"><Svg width="14" height="8" fill="none" stroke="#8c8c8c" strokeWidth="1.5"><path d="M6 1.5 H4 C0 1.5 0 6.5 4 6.5 H6 M8 1.5 H10 C14 1.5 14 6.5 10 6.5 H8 M4 4 H10" /></Svg></button>
      <button aria-label="Layer style"><Svg width="13" height="14" fill="none" stroke="#ddd" strokeWidth="1.3"><path d="M7 1.5 C5 .5 4.5 2 4 5 L3 10.5 C2.7 12.5 2 13 .5 12.5 M2 5 H6.5 M6.5 5 C8 5 9 11 11 11 M11.5 5 L6 11" /><path d="M10 13 H13 L11.5 14.5 Z" fill="#ddd" stroke="none" /></Svg></button>
      <button aria-label="Add mask"><Svg width="13" height="10"><path d="M0 0 H13 V10 H0 Z" fill="#ddd" /><circle cx="6.5" cy="5" r="3" fill="#535353" /></Svg></button>
      <button aria-label="Adjustment layer"><Svg width="13" height="12"><circle cx="6" cy="6" r="5" fill="none" stroke="#ddd" /><path d="M2.2 9.8 A5.3 5.3 0 0 0 9.8 2.2 Z" fill="#ddd" /><path d="M10 12 H13 L11.5 13.5 Z" fill="#ddd" /></Svg></button>
      <button aria-label="New group"><Svg width="13" height="11"><path d="M0 0 H5 L6 1.5 H13 V11 H0 Z" fill="#ddd" /></Svg></button>
      <button aria-label="New layer"><Svg width="11" height="11" fill="none" stroke="#ddd" strokeWidth="1.4"><path d="M.7 4 V.7 H10 V10 H5.5 M.7 5 L5.5 10 V5 Z" /></Svg></button>
      <button aria-label="Delete layer"><Svg width="11" height="12" fill="none" stroke="#ddd" strokeWidth="1.2"><path d="M0 2.5 H11 M3.5 2 V.6 H7.5 V2 M1.5 3 V11.4 H9.5 V3 M3.8 4.5 V10 M5.5 4.5 V10 M7.2 4.5 V10" /></Svg></button>
    </PanelFoot>
  </Panel>
)

const RightDock = () => (
  <Dock>
    <IconStrip>
      <ColumnHead $side="flex-end"><Arrows left /></ColumnHead>
      <StripGroup>
        <Grip $wide />
        <Svg width="16" height="17"><path d="M.5 .5 H4.5 V4.5 H.5 Z M.5 6.5 H4.5 V10.5 H.5 Z" fill="none" stroke="#ddd" /><path d="M0 12 H5 V17 H0 Z" fill="#ddd" /><path d="M10 15 C14.5 12 14.5 7 12 4" fill="none" stroke="#ddd" strokeWidth="2.2" /><path d="M8 1 L14.5 2 L9 7 Z" fill="#ddd" /></Svg>
      </StripGroup>
      <StripGroup>
        <Grip $wide />
        <Svg width="20" height="17"><path d="M0 0 H2 V2 H0 Z M3 0 H7 V1.5 H3 Z M0 3 H2 V5 H0 Z M3 3 H7 V4.5 H3 Z M0 6 H2 V8 H0 Z M3 6 H7 V7.5 H3 Z" fill="#ddd" /><path d="M20 2 C20 4 15 9 13.5 10 L12 8.5 C14 6 18 2.5 20 2 Z M11 10 L12.5 11.5 C12.5 14 9 17 4 16 C7 15 7 10 11 10 Z" fill="#ddd" /></Svg>
        <Svg width="20" height="18" fill="#ddd"><ellipse cx="5" cy="3.5" rx="4.5" ry="3" /><path d="M9 3 H20 V5 H9 Z M2 11 H11 V13 H2 Z M12 12 C14 8 17 7 19 7.5 V16.5 C16 17 14 15.5 12 12 Z" /></Svg>
      </StripGroup>
    </IconStrip>
    <Panels>
      <ColumnHead $side="flex-end"><Arrows /></ColumnHead>
      <ColorPanel />
      <PropertiesPanel />
      <LayersPanel />
    </Panels>
  </Dock>
)

// ---------- color picker ----------

const Dialog = styled.div`
  position: absolute;
  left: 76px;
  top: 247px;
  width: 535px;
  height: 403px;
  border: 1px solid #b4592a;
  background: ${c.panel};
  font-size: 12px;
`

const TitleBar = styled.div`
  display: flex;
  align-items: center;
  justify-content: space-between;
  height: 30px;
  padding: 0 9px 0 8px;
  background: ${c.orange};
  color: #fff;
`

const DialogBody = styled.div`
  display: flex;
  padding: 11px 10px 0 10px;
`

const FieldSide = styled.div`
  padding-top: 20px;
`

const WebOnly = styled.div`
  margin-top: 12px;
`

const Side = styled.div`
  flex: 1;
  min-width: 0;
  margin-left: 12px;
`

const TopHalf = styled.div`
  display: flex;
  justify-content: space-between;
  height: 158px;
`

const Preview = styled.div`
  width: 61px;
  padding-top: 20px;
  text-align: center;
  color: #cfcfcf;
`

const Swatch = styled.div`
  height: 69px;
  margin-bottom: 1px;
  border: 1px solid #333;
  background: #808080;
`

const Gamut = styled.div`
  display: flex;
  flex-direction: column;
  align-items: center;
  gap: 3px;
  margin-left: 8px;
  padding-top: 75px;
`

const MiniSwatch = styled.button`
  width: 13px;
  height: 13px;
  border: 1px solid #fff;
  background: #999;
`

const PillButtons = styled.div`
  display: flex;
  flex-direction: column;
  width: 116px;
  margin-left: auto;
`

const Pill = styled.button`
  height: 26px;
  margin-bottom: ${p => p.$after || 0}px;
  border: ${p => (p.$main ? 2 : 1)}px solid ${p => (p.$main ? '#c8c8c8' : '#757575')};
  border-radius: 13px;
  color: #e6e6e6;
`

const Fields = styled.div`
  display: flex;
  align-items: flex-start;
  gap: 13px;
  padding-left: 1px;
`

const FieldColumn = styled.div`
  display: flex;
  flex-direction: column;
  gap: 5px;
`

const FieldRow = styled.div`
  display: grid;
  grid-template-columns: 13px ${p => (p.$lab ? 19 : 20)}px ${p => (p.$wide ? 43 : 35)}px ${p => (p.$lab ? 0 : 12)}px;
  align-items: center;
  column-gap: 6px;
  height: 22px;
  margin-top: ${p => (p.$break ? 4 : 0)}px;
  label { color: #d6d6d6; }
`

const Radio = styled.input`
  appearance: none;
  display: block;
  width: 13px;
  height: 13px;
  border: 1px solid #7d7d7d;
  border-radius: 50%;
  &:checked {
    border: 4px solid #dcdcdc;
    background: #333;
  }
`

const Field = styled.input`
  width: 100%;
  height: 22px;
  padding: 0 5px;
  border: 1px solid #666;
  background: ${c.field};
  color: #f0f0f0;
`

const HexRow = styled.div`
  display: flex;
  align-items: center;
  gap: 8px;
  padding-left: 2px;
  margin-top: 9px;
`

const HexField = styled.input`
  width: 79px;
  height: 22px;
  padding: 0 4px;
  border: 1px solid #1d5fae;
  background: linear-gradient(#0078d7, #0078d7) 4px 3px / 42px 14px no-repeat ${c.field};
  color: #fff;
`

const CmykRow = styled.div`
  display: grid;
  grid-template-columns: 37px 35px 14px;
  align-items: center;
  column-gap: 7px;
  height: 22px;
  margin-top: ${p => (p.$break ? 4 : 0)}px;
  label { color: #cfcfcf; text-align: right; }
`

const hsb = [['H', '0', '°'], ['S', '0', '%'], ['B', '50', '%']]
const rgb = [['R', '128'], ['G', '128'], ['B', '128']]
const lab = [['L', '54'], ['a', '0'], ['b', '0']]
const cmyk = [['C', '52'], ['M', '43'], ['Y', '43'], ['K', '8']]

const Channel = ({ id, name, value, unit, ...rest }) => (
  <FieldRow {...rest}>
    <Radio type="radio" name="channel" aria-label={name} defaultChecked={id === 'hsb0'} />
    <label htmlFor={id}>{name}:</label>
    <Field id={id} defaultValue={value} />
    <span>{unit}</span>
  </FieldRow>
)

const ColorPicker = () => (
  <Dialog role="dialog" aria-label="Color Picker">
    <TitleBar>
      Color Picker (Foreground Color)
      <button aria-label="Close">
        <Svg width="11" height="11" fill="none" stroke="#fff" strokeWidth="1.2"><path d="M.5 .5 L10.5 10.5 M10.5 .5 L.5 10.5" /></Svg>
      </button>
    </TitleBar>
    <DialogBody>
      <FieldSide>
        <Row>
          <Spectrum $size={256} />
          <Hue $h={256} $left={12}><Pointer /><Pointer /></Hue>
        </Row>
        <WebOnly>
          <TickWrap $gap={6}><Tick type="checkbox" $size={13} />Only Web Colors</TickWrap>
        </WebOnly>
      </FieldSide>
      <Side>
        <TopHalf>
          <Preview>new<Swatch />current</Preview>
          <Gamut>
            <Svg width="12" height="13" fill="none" stroke="#cfcfcf" strokeWidth="1.2"><path d="M6 1 L11 3.5 V9 L6 12 L1 9 V3.5 Z M1 3.5 L6 6.5 L11 3.5 M6 6.5 V12" /></Svg>
            <MiniSwatch aria-label="Web safe color" />
          </Gamut>
          <PillButtons>
            <Pill $main $after={8}>OK</Pill>
            <Pill $after={15}>Cancel</Pill>
            <Pill $after={16}>Add to Swatches</Pill>
            <Pill>Color Libraries</Pill>
          </PillButtons>
        </TopHalf>
        <Fields>
          <div>
            <FieldColumn>
              {hsb.map(([n, v, u], i) => <Channel key={i} id={'hsb' + i} name={n} value={v} unit={u} />)}
              {rgb.map(([n, v], i) => <Channel key={i} id={'rgb' + i} name={n} value={v} $break={i === 0} />)}
            </FieldColumn>
            <HexRow>
              <label htmlFor="hex">#</label>
              <HexField id="hex" defaultValue="808080" />
            </HexRow>
          </div>
          <FieldColumn>
            {lab.map(([n, v], i) => <Channel key={n} id={'lab' + i} name={n} value={v} $lab $wide />)}
            {cmyk.map(([n, v], i) => (
              <CmykRow key={n} $break={i === 0}>
                <label htmlFor={'cmyk' + n}>{n}:</label>
                <Field id={'cmyk' + n} defaultValue={v} />
                <span>%</span>
              </CmykRow>
            ))}
          </FieldColumn>
        </Fields>
      </Side>
    </DialogBody>
  </Dialog>
)

// ---------- taskbar ----------

const Taskbar = styled.footer`
  display: flex;
  align-items: stretch;
  flex: none;
  height: 40px;
  background: linear-gradient(to right, #4e240e, #5a2a10 30%, #592a11 60%, #4e250f);
  color: #fff;
`

const TaskButton = styled.button`
  display: flex;
  align-items: center;
  justify-content: center;
  flex: none;
  width: ${p => (p.$system ? 48 : 49)}px;
  ${p => p.$active && css`
    background: #93400f;
    box-shadow: inset 0 -2px #f5b98f;
  `}
  ${p => p.$open && css`
    background: linear-gradient(#f5b98f, #f5b98f) 50% 100% / 41px 2px no-repeat;
  `}
`

const Tile = styled.span`
  display: flex;
  align-items: center;
  justify-content: center;
  width: 24px;
  height: 24px;
  background: ${p => p.$bg};
  border: ${p => (p.$edge ? '2px solid #f4f4f4' : 0)};
  border-radius: ${p => p.$round || 0};
`

const AppRow = styled.div`
  display: flex;
  margin-left: 2px;
`

const Tray = styled.div`
  display: flex;
  align-items: center;
  gap: 8px;
  margin-left: auto;
  padding-right: 4px;
`

const Clock = styled.div`
  width: 60px;
  text-align: center;
  font-size: 12px;
  line-height: 18px;
`

const Notices = styled.button`
  position: relative;
  margin: 0 11px 0 5px;
`

const Count = styled.span`
  position: absolute;
  left: 10px;
  top: 8px;
  width: 16px;
  height: 16px;
  border: 1px solid #c08060;
  border-radius: 50%;
  background: #8a3a12;
  line-height: 14px;
`

const DesktopEdge = styled.div`
  align-self: stretch;
  width: 1px;
  background: #8d7263;
`

const apps = [
  ['Edge', <FaEdgeLegacy size={24} color="#0a7ad6" />, 'open'],
  ['Chrome', (
    <Svg width="22" height="22" viewBox="0 0 22 22">
      <circle cx="11" cy="11" r="11" fill="#f9cc2b" />
      <path d="M11 0 A11 11 0 0 1 20.8 6 H11 A5 5 0 0 0 6.3 9.4 L2 4.7 A11 11 0 0 1 11 0 Z" fill="#e24237" />
      <path d="M1.6 5.4 L6.7 13.5 A5 5 0 0 0 12.5 15.7 L9.5 22 A11 11 0 0 1 1.6 5.4 Z" fill="#2fa24c" />
      <circle cx="11" cy="11" r="5.2" fill="#fff" /><circle cx="11" cy="11" r="4.1" fill="#4483ee" />
    </Svg>)],
  ['File Explorer', (
    <Svg width="22" height="20" viewBox="0 0 22 20">
      <path d="M1 1 H9 L11 3 H21 V19 H1 Z" fill="#f3d06e" /><path d="M1 5 H21 V19 H1 Z" fill="#fde69a" />
      <path d="M4 10 H18 V20 H14 V15 H8 V20 H4 Z" fill="#3fa9dd" />
    </Svg>), 'open'],
  ['Facebook', <Tile $bg="#3b5998" $edge><FaFacebookF size={16} color="#fff" /></Tile>],
  ['Aircraft', (
    <Tile $bg="#f9b23c">
      <Svg width="22" height="18" viewBox="0 0 22 18"><path d="M1 5 L5 4 L9 5.5 L14 3 L21 0 L20 3 L15 7 L19 6.5 L14.5 9.5 L12 11 L9 18 L7.5 17 L8 12 L5 10 L8 8 Z" fill="#1c1a14" /></Svg>
    </Tile>)],
  ['Google', <FcGoogle size={25} />],
  ['Editor', (
    <Svg width="22" height="18" viewBox="0 0 22 18">
      <path d="M4 1 L22 2 L18 16 L0 15 Z" fill="#6ea2cf" stroke="#27405c" /><path d="M6 4 L18 4.6 L15.5 13.5 L3.8 13 Z" fill="#8fb6da" />
      <path d="M9 5.5 L16 6 M8 8.8 H14 M7.5 12 H13 M9 5.5 L7 12" stroke="#fff" strokeWidth="1.6" />
    </Svg>)],
  ['GWC', (
    <Svg width="24" height="24" viewBox="0 0 24 24">
      <circle cx="12" cy="12" r="11.5" fill="#0a0a0a" />
      <path d="M6 5 L12 2.5 L11 6 L7 8 Z" fill="#fff" />
      <path d="M7 10 H2 V18 H7 V14 H5 M9 18 V10 L12 14 L15 10 V18 M22 10 H17 V18 H22 M17 14 H21" fill="none" stroke="#fff" strokeWidth="2" />
    </Svg>)],
  ['Blender', (
    <Svg width="24" height="20" viewBox="0 0 24 20">
      <path d="M1 15 L10 8 H3 V5.5 H13 L10 3 L12 1 L20 7 C26 13 21 19.5 15 19.5 C10 19.5 7.5 16.5 7.5 13.5 L3 17 Z" fill="#ea7c1c" />
      <circle cx="15" cy="12.5" r="4.6" fill="#fff" /><circle cx="15" cy="12.5" r="2.7" fill="#1c5a96" />
    </Svg>)],
  ['Spotify', <Tile $bg="#111" $round="50%"><FaSpotify size={25} color="#1ed760" /></Tile>, 'open'],
  ['TeamSpeak', (
    <Svg width="24" height="24" viewBox="0 0 24 24">
      <circle cx="12" cy="12" r="12" fill="#2b6391" />
      <path d="M6 13 V10 C6 3 18 3 18 10 V14 M17 16 C16 19 13 19.5 10.5 19" fill="none" stroke="#fff" strokeWidth="1.6" />
      <path d="M5 10 H8 V15 H5 Z M16 10 H19 V15 H16 Z" fill="#fff" /><circle cx="12" cy="12" r="3.5" fill="#1d3f66" />
    </Svg>)],
  ['Headset', (
    <Svg width="22" height="24" viewBox="0 0 22 24" fill="none" stroke="#17120f" strokeWidth="2">
      <path d="M3 13 V9 C3 -1 19 -1 19 9 V13 M3 18 C5 21 7 22.5 10 22.5" />
      <path d="M1 11 H5 V18 H1 Z M17 11 H21 V18 H17 Z" fill="#17120f" /><path d="M3 11 V17 M19 11 V17" stroke="#a08d80" strokeWidth="1.5" />
    </Svg>)],
  ['Minecraft', (
    <Svg width="24" height="24" viewBox="0 0 24 24">
      <path d="M12 1 L23 6 L12 12 L1 6 Z" fill="#6da24d" /><path d="M1 6 L12 12 V23 L3 18 Z" fill="#8a6549" /><path d="M23 6 L12 12 V23 L21 18 Z" fill="#5f4431" />
      <path d="M1 6 L12 12 V15 L9 12.5 L7 13 L5 10 L1 9.5 Z M23 6 L12 12 V14.5 L15 13 L17 11 L20 10.5 L23 9 Z" fill="#4b7a34" />
    </Svg>)],
  ['Vectors', (
    <Svg width="23" height="22" viewBox="0 0 23 22">
      <path d="M0 1 L8 1 L12 22 Z" fill="#f6c62c" /><path d="M8 1 L23 1 L12 22 Z" fill="#f79c22" /><path d="M15 1 L23 1 L17 12 Z" fill="#f0603c" />
    </Svg>)],
  ['Photoshop', <PsLogo $size={22}>Ps</PsLogo>, 'active'],
  ['Discord', <Tile $bg="#7289da" $round="4px"><FaDiscord size={18} color="#fff" /></Tile>, 'open'],
]

const Task = () => (
  <Taskbar>
    <TaskButton $system aria-label="Start"><FaWindows size={16} /></TaskButton>
    <TaskButton $system aria-label="Search">
      <Svg width="16" height="16" fill="none" stroke="#fff" strokeWidth="1.4"><circle cx="10" cy="6" r="5" /><path d="M6.5 9.5 L1 15" /></Svg>
    </TaskButton>
    <TaskButton $system aria-label="Task View">
      <Svg width="16" height="15" fill="none" stroke="#fff" strokeWidth="1.2"><path d="M.6 0 V2.5 H10 V0 M.6 15 V12.5 H10 V15 M.6 5 H10 V10 H.6 Z M14 0 V4 M14 8 V15 M13 5 H15.5 V7.5 H13 Z" /></Svg>
    </TaskButton>
    <AppRow>
      {apps.map(([name, icon, state]) => (
        <TaskButton key={name} aria-label={name} $open={state === 'open'} $active={state === 'active'}>{icon}</TaskButton>
      ))}
    </AppRow>
    <Tray>
      <Svg width="16" height="8" viewBox="-2 0 16 8" fill="none" stroke="#fff" strokeWidth="1.3"><path d="M.5 6.5 L6 1 L11.5 6.5" /></Svg>
      <Svg width="16" height="14"><rect x=".5" y="1.5" width="15" height="11" rx="1" fill="#1e7a35" stroke="#0a0a0a" /><rect x="3" y="4" width="10" height="6" fill="#fff" /><path d="M7 8 L14 1" stroke="#c22" strokeWidth="2" /></Svg>
      <Svg width="16" height="16"><path d="M8 0 L10 1.5 H15 V8 C15 12 12 14 8 16 C4 14 1 12 1 8 V1.5 H6 Z" fill="#cfcfcf" /><path d="M2.5 3 L8 2 L13.5 3 V9 L8 14.5 L2.5 10 Z" fill="#1a1a1a" /><path d="M3 5 L8 6 L7 12 L3 9 Z" fill="#b52222" /></Svg>
      <Svg width="16" height="14" fill="none" stroke="#fff" strokeWidth="1.2"><path d="M5 2.5 H15.4 V10 H4.5 V7 M9.5 10 V13 M6 13.4 H13 M.6 .6 H4 V5 H.6 Z M2.2 5 V13" /></Svg>
      <Svg width="16" height="14" fill="none" stroke="#fff" strokeWidth="1.2"><path d="M.6 5 H3 L6.5 2 V12 L3 9 H.6 Z M8.5 5 Q10 7 8.5 9 M10.5 3.5 Q13 7 10.5 10.5" /><path d="M12.8 2 Q16.5 7 12.8 12" stroke="#a08070" /></Svg>
      <FaDropbox size={16} />
      <Clock>12:30 AM<br />5/26/2019</Clock>
      <Notices aria-label="Notifications">
        <Svg width="17" height="18"><path d="M0 0 H16 V12 H8 L4 16 V12 H0 Z" fill="#fff" /><path d="M3 3.5 H13 M3 6 H13 M3 8.5 H13" stroke="#6b3317" /></Svg>
        <Count>2</Count>
      </Notices>
      <DesktopEdge />
    </Tray>
  </Taskbar>
)

export default function App() {
  return (
    <Screen>
      <Global />
      <Menu />
      <Options />
      <Workspace>
        <ToolPanel />
        <DocumentArea />
        <RightDock />
      </Workspace>
      <Task />
      <ColorPicker />
    </Screen>
  )
}
